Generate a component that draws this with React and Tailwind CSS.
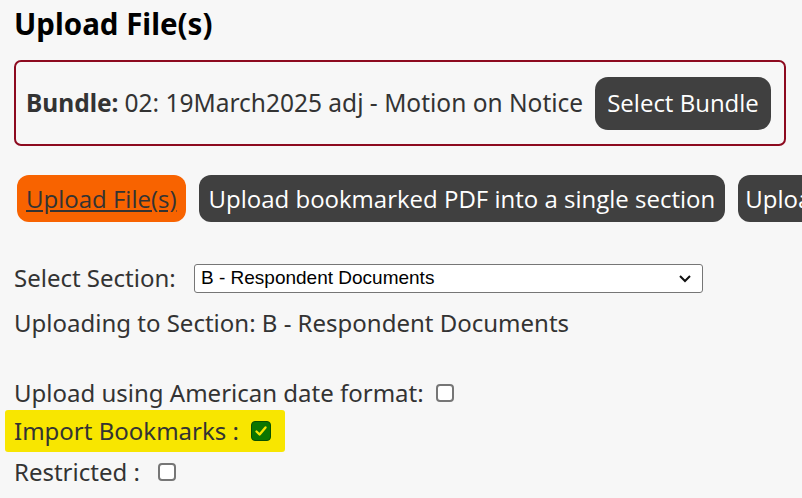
import React from "react";

function Box({ checked }) {
  if (checked) {
    return (
      <span className="inline-flex items-center justify-center w-[20px] h-[20px] rounded-[4px] bg-[#0b7500] border border-[#075000]">
        <svg width="14" height="14" viewBox="0 0 14 14">
          <path d="M2.5 7.5 L5.6 10.5 L11.5 3.5" fill="none" stroke="#f7e600" strokeWidth="2.4" strokeLinecap="round" strokeLinejoin="round" />
        </svg>
      </span>
    );
  }
  return <span className="inline-block w-[18px] h-[18px] rounded-[4px] border-2 border-[#767676] bg-white" />;
}

export default function App() {
  return (
    <div className="min-h-[498px] w-[802px] overflow-hidden bg-[#f7f7f7] text-[#333] pl-[14px] pt-[4px]" style={{ fontFamily: "'Noto Sans', sans-serif" }}>
      <h1 className="text-[29.5px] font-bold text-black leading-[40px]">Upload File(s)</h1>
      <div className="mt-[16px] w-[772px] h-[86px] border-2 border-[#8d0a1f] rounded-[7px] flex items-center pl-[10px] text-[24.5px] whitespace-nowrap">
        <span className="font-bold">Bundle:</span>
        <span className="ml-[6px]">02: 19March2025 adj - Motion on Notice</span>
        <button className="ml-[12px] h-[53px] px-[12px] rounded-[13px] bg-[#404040] text-white text-[24px] shrink-0" style={{ fontFamily: "'Open Sans', sans-serif" }}>Select Bundle</button>
      </div>
      <div className="mt-[29px] flex gap-[13px] whitespace-nowrap text-[24px]" style={{ fontFamily: "'Open Sans', sans-serif" }}>
        <button className="ml-[3px] h-[47px] px-[9px] rounded-[12px] bg-[#f86300] text-[#333] underline shrink-0">Upload File(s)</button>
        <button className="h-[47px] px-[10px] rounded-[12px] bg-[#404040] text-white shrink-0">Upload bookmarked PDF into a single section</button>
        <button className="h-[47px] pl-[7px] rounded-l-[12px] bg-[#404040] text-white flex-1 min-w-0 overflow-hidden text-left">Uploa</button>
      </div>
      <div className="mt-[41px] flex items-center text-[24px] h-[30px]">
        <span className="w-[174px] shrink-0">Select Section:</span>
        <div className="ml-[6px] w-[509px] h-[29px] border border-[#767676] rounded-[3px] bg-white flex items-center justify-between pl-[6px] pr-[10px] text-black text-[19px]" style={{ fontFamily: "'Liberation Sans', Arial, sans-serif" }}>
          <span>B - Respondent Documents</span>
          <svg width="14" height="10" viewBox="0 0 14 10"><path d="M2 3 L7 8 L12 3" fill="none" stroke="#111" strokeWidth="2" /></svg>
        </div>
      </div>
      <div className="mt-[15px] text-[24px] leading-[30px]">Uploading to Section: B - Respondent Documents</div>
      <div className="mt-[40px] flex items-center h-[30px] text-[24px]">
        <span>Upload using American date format:</span>
        <span className="ml-[12px] flex"><Box /></span>
      </div>
      <div className="mt-[2px] -ml-[9px] w-[280px] h-[42px] bg-[#f8e600] rounded-[3px] flex items-center pl-[9px] text-[24px]">
        <span>Import Bookmarks :</span>
        <span className="ml-[12px] flex"><Box checked /></span>
      </div>
      <div className="mt-[5px] flex items-center h-[30px] text-[24px]">
        <span>Restricted :</span>
        <span className="ml-[18px] flex"><Box /></span>
      </div>
    </div>
  );
}
